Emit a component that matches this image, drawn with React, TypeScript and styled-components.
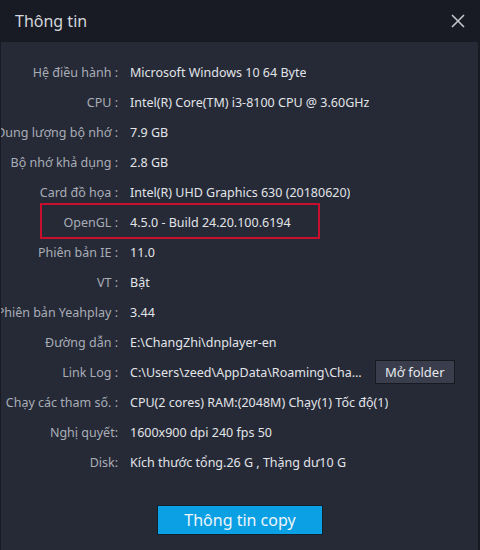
import React from "react";
import styled, { createGlobalStyle } from "styled-components";

const rows: { label: string; value: string; mark?: boolean; action?: string }[] = [
  { label: "Hệ điều hành :", value: "Microsoft Windows 10 64 Byte" },
  { label: "CPU :", value: "Intel(R) Core(TM) i3-8100 CPU @ 3.60GHz" },
  { label: "Dung lượng bộ nhớ :", value: "7.9 GB" },
  { label: "Bộ nhớ khả dụng :", value: "2.8 GB" },
  { label: "Card đồ họa :", value: "Intel(R) UHD Graphics 630 (20180620)" },
  { label: "OpenGL :", value: "4.5.0 - Build 24.20.100.6194", mark: true },
  { label: "Phiên bản IE :", value: "11.0" },
  { label: "VT :", value: "Bật" },
  { label: "Phiên bản Yeahplay :", value: "3.44" },
  { label: "Đường dẫn :", value: "E:\\ChangZhi\\dnplayer-en" },
  {
    label: "Link Log :",
    value: "C:\\Users\\zeed\\AppData\\Roaming\\ChangZhi\\dnplayer-en\\log",
    action: "Mở folder",
  },
  { label: "Chạy các tham số. :", value: "CPU(2 cores) RAM:(2048M) Chạy(1) Tốc độ(1)" },
  { label: "Nghị quyết:", value: "1600x900 dpi 240 fps 50" },
  { label: "Disk:", value: "Kích thước tổng.26 G , Thặng dư10 G" },
];

const App = () => {
  return (
    <>
      <GlobalStyle />
      <Window>
        <Header>
          <Title>Thông tin</Title>
          <Close aria-label="close">
            <svg width="16" height="16" viewBox="0 0 16 16">
              <path d="M2 2 L14 14 M14 2 L2 14" stroke="#c4c7cd" strokeWidth="1.6" />
            </svg>
          </Close>
        </Header>
        <Panel>
          <List>
            {rows.map((r) => (
              <Row key={r.label} mark={r.mark}>
                <Label>
                  <span>{r.label}</span>
                </Label>
                <ValueCell>
                  <Value short={!!r.action}>{r.value}</Value>
                  {r.action && <SmallButton>{r.action}</SmallButton>}
                </ValueCell>
              </Row>
            ))}
          </List>
          <Footer>
            <CopyButton>Thông tin copy</CopyButton>
          </Footer>
        </Panel>
      </Window>
    </>
  );
};

const GlobalStyle = createGlobalStyle`
  html, body {
    margin: 0;
    background: #181b24;
  }
  body {
    font-family: "Noto Sans", "Open Sans", sans-serif;
  }
`;

const Window = styled.div`
  width: 480px;
  height: 550px;
  display: flex;
  flex-direction: column;
  background: #181b24;
  overflow: hidden;
`;

const Header = styled.div`
  height: 42px;
  display: flex;
  align-items: center;
  justify-content: space-between;
  padding: 0 13px 0 15px;
  flex-shrink: 0;
`;

const Title = styled.div`
  font-size: 16px;
  color: #d3d6dc;
`;

const Close = styled.button`
  background: none;
  border: none;
  padding: 0;
  width: 18px;
  height: 18px;
  display: flex;
  align-items: center;
  justify-content: center;
  cursor: pointer;
`;

const Panel = styled.div`
  flex: 1;
  margin: 0 2px 0 1px;
  background: #262a37;
  padding-top: 15px;
  display: flex;
  flex-direction: column;
  overflow: hidden;
`;

const List = styled.div`
  display: flex;
  flex-direction: column;
`;

const Row = styled.div<{ mark?: boolean }>`
  position: relative;
  height: 30px;
  display: grid;
  grid-template-columns: 117px 1fr;
  column-gap: 12px;
  align-items: center;
  font-size: 12.5px;

  ${({ mark }) =>
    mark &&
    `
    &::after {
      content: "";
      position: absolute;
      left: 39px;
      width: 276px;
      top: -4px;
      bottom: -2px;
      border: 2px solid #c8102e;
    }
  `}
`;

const Label = styled.div`
  display: flex;
  justify-content: flex-end;
  color: #a9adb6;
  white-space: nowrap;

  span {
    flex-shrink: 0;
  }
`;

const ValueCell = styled.div`
  display: flex;
  align-items: center;
  gap: 7px;
  min-width: 0;
`;

const Value = styled.div<{ short: boolean }>`
  color: #e2e4e8;
  white-space: nowrap;
  overflow: hidden;
  text-overflow: ellipsis;
  width: ${({ short }) => (short ? "238px" : "auto")};
  flex-shrink: 0;
`;

const SmallButton = styled.button`
  height: 24px;
  padding: 0 9px;
  background: #3a3e4c;
  border: 1px solid #171a21;
  color: #e6e8ec;
  font-family: inherit;
  font-size: 13px;
  white-space: nowrap;
`;

const Footer = styled.div`
  display: flex;
  justify-content: center;
  padding-top: 28px;
  padding-left: 1px;
`;

const CopyButton = styled.button`
  width: 166px;
  height: 30px;
  background: #0ba0e3;
  border: 1px solid #13202e;
  color: #eef6fb;
  font-family: inherit;
  font-size: 16px;
  cursor: pointer;
`;

export default App;
